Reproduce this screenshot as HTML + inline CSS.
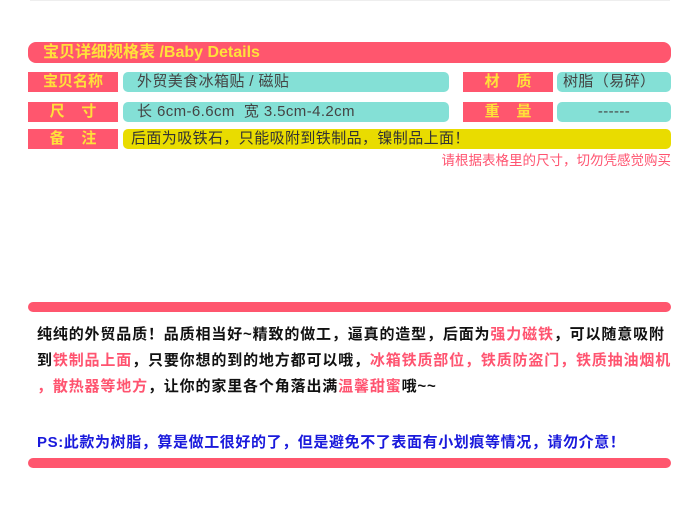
<!DOCTYPE html>
<html><head><meta charset="utf-8"><style>
*{margin:0;padding:0;box-sizing:border-box}
body{width:700px;height:516px;background:#fff;position:relative;overflow:hidden;font-family:"Liberation Sans","Noto Sans CJK SC",sans-serif}
.a{position:absolute}
.pk{background:#ff566e}
.tl{background:#84e0d6}
.lab{color:#ffe13a;font-weight:bold;font-size:15px;line-height:20px;text-align:center}
.val{color:#444;font-size:15px;line-height:20px;border-radius:5px;letter-spacing:0.4px;white-space:nowrap}
.t{font-size:15px;letter-spacing:0.85px;color:#111;font-weight:bold;left:37px;white-space:nowrap;line-height:20px}
.r{color:#ff5470}
</style></head><body>
<div class="a" style="left:30px;top:0;width:640px;height:1px;background:#eee"></div>
<div class="a pk" style="left:28px;top:42px;width:643px;height:21px;border-radius:8px"></div>
<div class="a" style="left:43px;top:42px;font-size:16px;font-weight:bold;color:#ffe13a;line-height:21px">宝贝详细规格表 /Baby Details</div>

<div class="a pk lab" style="left:28px;top:72px;width:90px;height:20px">宝贝名称</div>
<div class="a tl val" style="left:123px;top:72px;width:326px;height:20px;padding-left:14px">外贸美食冰箱贴 / 磁贴</div>
<div class="a pk lab" style="left:463px;top:72px;width:90px;height:20px">材&nbsp;&nbsp;&nbsp;&nbsp;质</div>
<div class="a tl val" style="left:557px;top:72px;width:114px;height:20px;padding-left:6px">树脂（易碎）</div>

<div class="a pk lab" style="left:28px;top:102px;width:90px;height:20px">尺&nbsp;&nbsp;&nbsp;&nbsp;寸</div>
<div class="a tl val" style="left:123px;top:102px;width:326px;height:20px;padding-left:14px">长 6cm-6.6cm&nbsp; 宽 3.5cm-4.2cm</div>
<div class="a pk lab" style="left:463px;top:102px;width:90px;height:20px">重&nbsp;&nbsp;&nbsp;&nbsp;量</div>
<div class="a tl val" style="left:557px;top:102px;width:114px;height:20px;text-align:center">------</div>

<div class="a pk lab" style="left:28px;top:129px;width:90px;height:20px">备&nbsp;&nbsp;&nbsp;&nbsp;注</div>
<div class="a val" style="left:123px;top:129px;width:548px;height:20px;background:#e9dc00;padding-left:8px;color:#333">后面为吸铁石，只能吸附到铁制品，镍制品上面！</div>

<div class="a" style="right:29px;top:152px;font-size:13.5px;color:#ff5470;line-height:18px">请根据表格里的尺寸，切勿凭感觉购买</div>

<div class="a pk" style="left:28px;top:302px;width:643px;height:10px;border-radius:5px"></div>
<div class="a t" style="top:325px">纯纯的外贸品质！品质相当好~精致的做工，逼真的造型，后面为<span class="r">强力磁铁</span>，可以随意吸附</div>
<div class="a t" style="top:351px">到<span class="r">铁制品上面</span>，只要你想的到的地方都可以哦，<span class="r">冰箱铁质部位，铁质防盗门，铁质抽油烟机</span></div>
<div class="a t" style="top:377px"><span class="r">，散热器等地方</span>，让你的家里各个角落出满<span class="r">温馨甜蜜</span>哦~~</div>
<div class="a t" style="top:433px;color:#1a1adc;letter-spacing:0.6px">PS:此款为树脂，算是做工很好的了，但是避免不了表面有小划痕等情况，请勿介意！</div>
<div class="a pk" style="left:28px;top:458px;width:643px;height:10px;border-radius:5px"></div>
</body></html>
